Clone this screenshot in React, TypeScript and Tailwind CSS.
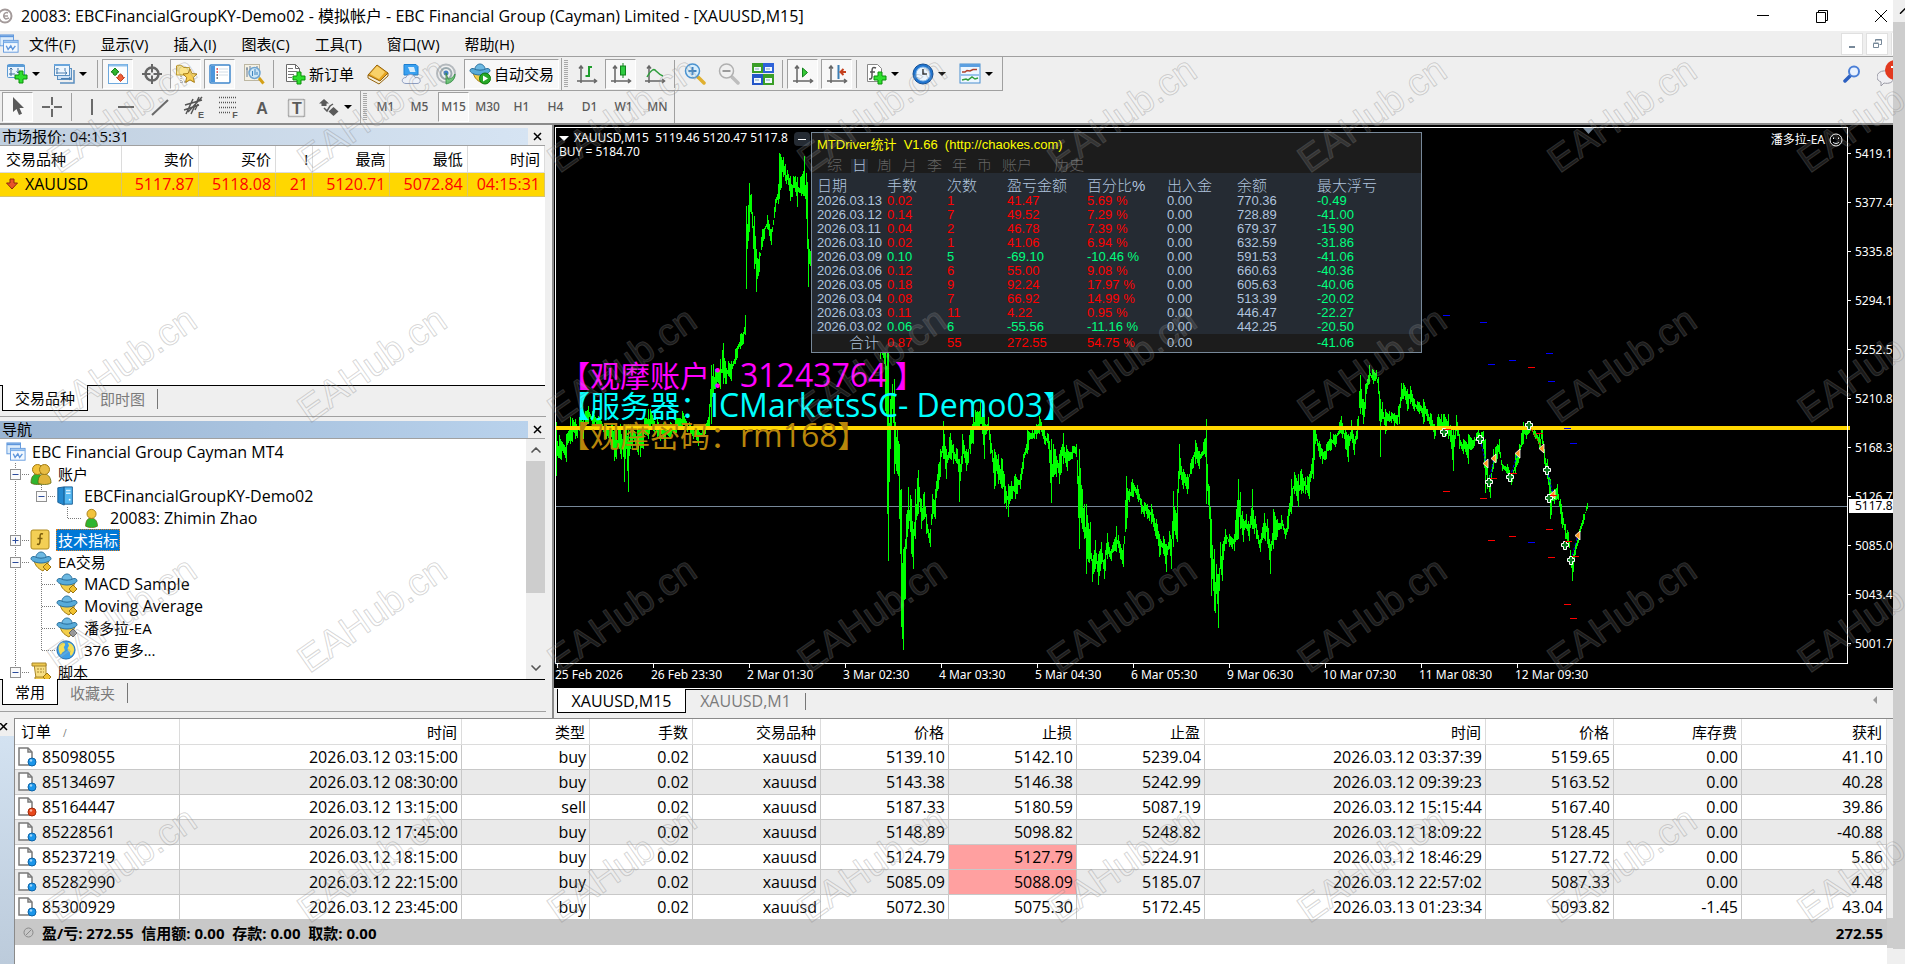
import type { ReactNode } from "react";
import { ChevronDown, ChevronUp } from "lucide-react";

/* ---------- data ---------- */

const menus = ["文件(F)", "显示(V)", "插入(I)", "图表(C)", "工具(T)", "窗口(W)", "帮助(H)"];
const periods = ["M1", "M5", "M15", "M30", "H1", "H4", "D1", "W1", "MN"];

const orders = [
  ["85098055", "2026.03.12 03:15:00", "buy", "0.02", "xauusd", "5139.10", "5142.10", "5239.04", "2026.03.12 03:37:39", "5159.65", "0.00", "41.10"],
  ["85134697", "2026.03.12 08:30:00", "buy", "0.02", "xauusd", "5143.38", "5146.38", "5242.99", "2026.03.12 09:39:23", "5163.52", "0.00", "40.28"],
  ["85164447", "2026.03.12 13:15:00", "sell", "0.02", "xauusd", "5187.33", "5180.59", "5087.19", "2026.03.12 15:15:44", "5167.40", "0.00", "39.86"],
  ["85228561", "2026.03.12 17:45:00", "buy", "0.02", "xauusd", "5148.89", "5098.82", "5248.82", "2026.03.12 18:09:22", "5128.45", "0.00", "-40.88"],
  ["85237219", "2026.03.12 18:15:00", "buy", "0.02", "xauusd", "5124.79", "5127.79", "5224.91", "2026.03.12 18:46:29", "5127.72", "0.00", "5.86"],
  ["85282990", "2026.03.12 22:15:00", "buy", "0.02", "xauusd", "5085.09", "5088.09", "5185.07", "2026.03.12 22:57:02", "5087.33", "0.00", "4.48"],
  ["85300929", "2026.03.12 23:45:00", "buy", "0.02", "xauusd", "5072.30", "5075.30", "5172.45", "2026.03.13 01:23:34", "5093.82", "-1.45", "43.04"],
];
const orderHeads = ["订单", "时间", "类型", "手数", "交易品种", "价格", "止损", "止盈", "时间", "价格", "库存费", "获利"];
const stopHit = ["85237219", "85282990"];

const statHeads = ["日期", "手数", "次数", "盈亏金额", "百分比%", "出入金", "余额", "最大浮亏"];
const stats = [
  ["2026.03.13", "0.02", "1", "41.47", "5.69 %", "0.00", "770.36", "-0.49"],
  ["2026.03.12", "0.14", "7", "49.52", "7.29 %", "0.00", "728.89", "-41.00"],
  ["2026.03.11", "0.04", "2", "46.78", "7.39 %", "0.00", "679.37", "-15.90"],
  ["2026.03.10", "0.02", "1", "41.06", "6.94 %", "0.00", "632.59", "-31.86"],
  ["2026.03.09", "0.10", "5", "-69.10", "-10.46 %", "0.00", "591.53", "-41.06"],
  ["2026.03.06", "0.12", "6", "55.00", "9.08 %", "0.00", "660.63", "-40.36"],
  ["2026.03.05", "0.18", "9", "92.24", "17.97 %", "0.00", "605.63", "-40.06"],
  ["2026.03.04", "0.08", "7", "66.92", "14.99 %", "0.00", "513.39", "-20.02"],
  ["2026.03.03", "0.11", "11", "4.22", "0.95 %", "0.00", "446.47", "-22.27"],
  ["2026.03.02", "0.06", "6", "-55.56", "-11.16 %", "0.00", "442.25", "-20.50"],
];

const dates = ["25 Feb 2026", "26 Feb 23:30", "2 Mar 01:30", "3 Mar 02:30", "4 Mar 03:30", "5 Mar 04:30", "6 Mar 05:30", "9 Mar 06:30", "10 Mar 07:30", "11 Mar 08:30", "12 Mar 09:30"];
const prices = ["5419.1", "5377.4", "5335.8", "5294.1", "5252.5", "5210.8", "5168.3", "5126.7", "5085.0", "5043.4", "5001.7"];

// x, high, low
type Bar = [number, number, number];
const runs: Bar[][] = [
  [
    [556, 423, 477], [560, 440, 460], [566, 435, 463], [570, 418, 445], [575, 420, 440], [583, 415, 440], [588, 407, 425], [592, 412, 426],
    [600, 418, 432], [606, 425, 440], [612, 425, 450], [614, 430, 462], [620, 425, 455], [624, 425, 483], [626, 430, 450], [628, 425, 493], [630, 425, 450],
    [640, 425, 458], [648, 410, 440], [650, 410, 430], [657, 420, 440], [665, 425, 445], [675, 420, 435], [682, 412, 430], [690, 425, 435],
    [698, 430, 447], [705, 425, 435], [709, 405, 427], [711, 366, 425], [713, 365, 395], [716, 372, 388], [720, 360, 390], [723, 344, 385],
    [725, 362, 385], [731, 362, 382], [735, 350, 365], [740, 335, 350], [743, 333, 345], [745, 316, 336],
  ],
  [
    [746, 207, 290], [747, 225, 250], [749, 184, 233], [751, 195, 215], [754, 217, 270], [756, 250, 293], [759, 253, 273], [762, 230, 248],
    [767, 216, 230], [771, 230, 246], [775, 200, 213], [778, 185, 205], [779, 154, 200], [783, 158, 178], [785, 165, 182], [790, 177, 202], [795, 177, 193],
    [797, 178, 208], [801, 177, 197], [804, 157, 197], [807, 183, 250], [808, 240, 288], [811, 238, 280],
  ],
  [
    [880, 340, 360], [884, 345, 365], [887, 353, 515], [888, 353, 562], [890, 400, 450], [892, 385, 410], [894, 380, 475], [897, 430, 475], [899, 445, 520], [901, 490, 628],
    [903, 550, 651], [905, 540, 600], [906, 515, 550], [908, 488, 530], [911, 500, 555], [913, 530, 570], [915, 490, 540], [918, 471, 515],
    [921, 500, 530], [924, 493, 520], [926, 515, 535], [930, 530, 548], [932, 495, 520], [935, 490, 520], [938, 465, 490], [940, 450, 478],
    [943, 422, 460], [946, 450, 480], [950, 434, 460], [953, 445, 465], [957, 450, 465], [959, 460, 503], [962, 435, 465], [966, 450, 472],
    [970, 430, 455], [973, 410, 445], [977, 412, 430], [980, 403, 425], [984, 415, 460], [988, 418, 430], [990, 435, 455], [994, 450, 490],
    [998, 455, 485], [1002, 460, 490], [1004, 475, 505], [1008, 485, 518], [1011, 482, 500], [1015, 475, 500], [1020, 475, 490], [1023, 455, 470],
    [1027, 430, 455], [1032, 430, 440], [1036, 425, 440], [1039, 417, 435], [1044, 430, 445], [1048, 435, 450], [1051, 440, 504], [1055, 450, 475],
    [1059, 455, 485], [1063, 434, 465], [1067, 450, 472], [1072, 447, 460], [1076, 445, 458], [1079, 450, 550], [1082, 490, 530], [1084, 505, 540],
    [1086, 505, 575], [1090, 523, 560], [1092, 560, 583], [1095, 541, 570], [1098, 555, 586], [1101, 543, 565], [1104, 560, 580], [1107, 534, 560],
    [1111, 550, 562], [1116, 527, 553], [1120, 545, 560], [1123, 545, 568], [1126, 477, 530], [1129, 490, 503], [1132, 480, 498], [1137, 486, 500],
    [1141, 500, 515], [1147, 505, 520], [1151, 505, 525], [1156, 520, 540], [1159, 535, 558], [1163, 537, 555], [1166, 545, 573], [1169, 532, 550],
    [1171, 540, 570], [1173, 492, 548], [1177, 490, 543], [1179, 445, 480], [1183, 470, 490], [1187, 475, 495], [1191, 460, 475], [1195, 441, 465],
    [1199, 452, 470], [1204, 440, 455], [1206, 420, 505], [1209, 487, 520], [1211, 520, 597], [1214, 550, 612], [1218, 575, 629], [1220, 543, 570],
    [1222, 545, 582], [1225, 530, 545], [1229, 535, 548], [1234, 535, 552], [1238, 480, 540], [1240, 493, 530], [1243, 520, 543], [1246, 515, 530],
    [1249, 525, 542], [1252, 490, 530], [1256, 525, 540], [1260, 540, 553], [1264, 514, 540], [1267, 520, 545], [1270, 545, 575], [1273, 510, 550],
    [1277, 520, 538], [1281, 516, 530], [1285, 530, 540], [1288, 510, 530], [1291, 480, 515], [1294, 473, 495], [1298, 475, 508], [1301, 470, 495],
    [1305, 478, 495], [1309, 475, 500], [1313, 430, 480], [1315, 427, 445], [1319, 442, 458], [1322, 450, 465], [1326, 445, 460], [1330, 433, 452],
    [1335, 435, 448], [1341, 417, 435], [1345, 430, 450], [1348, 435, 463], [1351, 421, 440], [1354, 440, 456], [1357, 420, 440], [1360, 376, 415],
    [1363, 400, 425], [1365, 385, 410], [1367, 380, 390], [1369, 366, 385], [1373, 371, 385], [1376, 371, 380], [1378, 378, 395], [1380, 400, 458],
    [1382, 403, 420], [1385, 410, 435], [1389, 412, 423], [1394, 414, 427], [1399, 405, 425], [1401, 384, 402], [1403, 384, 400], [1407, 390, 412],
    [1410, 387, 405], [1414, 400, 412], [1419, 403, 415], [1423, 400, 425], [1427, 410, 422], [1431, 415, 430], [1434, 425, 440], [1438, 415, 430],
    [1441, 415, 435], [1444, 415, 435], [1448, 415, 440], [1451, 430, 450], [1453, 430, 472], [1456, 416, 432], [1459, 435, 450], [1463, 440, 455],
    [1468, 435, 465], [1474, 438, 447], [1478, 430, 440], [1481, 433, 445], [1483, 432, 450], [1485, 440, 494], [1487, 465, 490], [1490, 480, 499],
    [1493, 450, 470], [1497, 445, 460], [1499, 440, 455], [1502, 465, 472], [1507, 465, 475], [1511, 475, 486], [1515, 455, 475], [1519, 445, 460],
    [1523, 423, 445], [1526, 425, 440], [1530, 422, 432], [1535, 432, 440], [1539, 435, 450], [1542, 428, 445], [1544, 450, 465], [1547, 460, 480],
    [1550, 480, 520], [1554, 490, 505], [1557, 485, 500], [1561, 505, 525], [1565, 525, 540], [1568, 533, 545], [1572, 560, 582], [1575, 545, 556],
    [1579, 530, 540], [1583, 515, 525], [1587, 504, 510],
  ],
];

function barPath(run: Bar[]) {
  let d = "";
  run.forEach(([x, hi, lo], i) => {
    d += `M${x}.5 ${hi}V${lo}`;
    const next = run[i + 1];
    if (!next) return;
    for (let px = x + 1; px < next[0]; px++) {
      const t = (px - x) / (next[0] - x);
      const h = hi + (next[1] - hi) * t;
      const l = lo + (next[2] - lo) * t;
      const shrink = (l - h) * 0.48;
      const a = ((px * 7919) % 13) / 13;
      const b = ((px * 104729) % 11) / 11;
      d += `M${px}.5 ${Math.round(h + shrink * a)}V${Math.round(l - shrink * b)}`;
    }
  });
  return d;
}

const blueTicks = [[1446, 316], [1483, 323], [1549, 354], [1491, 365], [1512, 361], [1551, 382], [1567, 429], [1573, 444], [1531, 543]];
const redTicks = [[1531, 368], [1447, 430], [1446, 492], [1483, 499], [1493, 479], [1513, 474], [1539, 434], [1549, 530], [1491, 541], [1512, 537], [1551, 558], [1553, 496], [1568, 542], [1575, 557], [1567, 605], [1573, 619]];
const entries = [[1444, 433], [1480, 440], [1489, 483], [1510, 478], [1529, 426], [1547, 471], [1549, 499], [1565, 546], [1571, 561]];
const exits = [[1486, 464], [1494, 459], [1518, 454], [1542, 449], [1553, 495], [1578, 536]];

/* ---------- icons ---------- */

const Svg = ({ children, size = 22 }: { children: ReactNode; size?: number }) => (
  <svg width={size} height={size} viewBox="0 0 22 22" fill="none" className="shrink-0">
    {children}
  </svg>
);

const Plus = ({ x = 9, y = 8 }: { x?: number; y?: number }) => (
  <path transform={`translate(${x} ${y})`} d="M4 0h4v4h4v4H8v4H4V8H0V4h4z" fill="#2ee02e" stroke="#0b8f0b" />
);

const NewChartIcon = () => (
  <Svg>
    <rect x="1.500" y="1.500" width="17" height="13" rx="1" fill="#eaf4fd" stroke="#5b9bd5" />
    <path d="M1 3h18" stroke="#5b9bd5" strokeWidth="2" />
    <path d="M5 5v8M3.500 6.500L5 5l1.500 1.500M3 11h6M12 5v5M10.500 8.500L12 10l1.500-1.500" stroke="#3d6c98" />
    <Plus x={9} y={8} />
  </Svg>
);
const ProfilesIcon = () => (
  <Svg>
    <path d="M7 20h14V7" stroke="#5b8fc0" strokeWidth="1.500" />
    <rect x="4.500" y="5.500" width="14" height="11" fill="#cfe3f6" stroke="#5b8fc0" />
    <rect x="1.500" y="1.500" width="15" height="11" fill="#eef6fd" stroke="#5b8fc0" />
    <path d="M1 2h16" stroke="#69a5dc" strokeWidth="2" />
    <path d="M4 5v6M3 6.500L4.500 5 6 6.500M3 10h11M12 8.500l2 1.500-2 1.500M12 5v3" stroke="#4a7fb0" />
    <path d="M8 15.500h9M16 14l2 1.500-2 1.500" stroke="#4a7fb0" />
  </Svg>
);
const MarketIcon = () => (
  <Svg>
    <rect x="1.500" y="1.500" width="19" height="19" fill="#fbfdff" stroke="#6da9de" />
    <path d="M2 2.500h18" stroke="#8fc0ec" strokeWidth="2" />
    <path d="M8 5l4 4-2 .5V11L8 12.500 6 11V9.500L4 9z" fill="#2fb52f" stroke="#14801a" />
    <path d="M13.500 18.500l4-4-2-.5v-1.500l-2-1.500-2 1.500V14l-2 .5z" fill="#f0603a" stroke="#c23d1c" />
  </Svg>
);
const TargetIcon = () => (
  <Svg>
    <circle cx="11" cy="11" r="6.500" stroke="#666" strokeWidth="2.500" />
    <path d="M11 1v8.500M11 12.500V21M1 11h8.500M12.500 11H21" stroke="#666" strokeWidth="2" />
  </Svg>
);
const FolderStarIcon = () => (
  <Svg>
    <path d="M1.500 3c0-1 5-1 6 0l1 1.500h6V12h-13z" fill="#fbe48a" stroke="#b8931f" />
    <path d="M6 13v7M7 19h5" stroke="#777" strokeDasharray="1 1" />
    <path d="M15 6l2 4.500 5 .5-3.600 3.400 1 5-4.400-2.500-4.400 2.500 1-5L8 11l5-.5z" fill="#f7cf52" stroke="#a67a12" />
  </Svg>
);
const NavIcon = () => (
  <Svg>
    <rect x="1" y="2" width="20" height="18" rx="1" fill="#fff" stroke="#3f87cc" strokeWidth="1.500" />
    <path d="M2 3h4v16H2z" fill="#4c96dc" />
    <path d="M7.500 6h1.500M7.500 9h1.500" stroke="#d33" strokeWidth="1.500" />
    <path d="M7.500 12h1.500M7.500 15h1.500" stroke="#555" strokeWidth="1.500" />
    <path d="M10 6h9M10 9h9M10 12h9" stroke="#d3dde6" />
  </Svg>
);
const TesterIcon = () => (
  <Svg>
    <rect x="1.500" y="1.500" width="15" height="16" fill="#f5f1e4" stroke="#bdb7a2" />
    <path d="M4 4v10M3 6h2M7 3v6M14 3v8" stroke="#6a7f95" />
    <circle cx="11.500" cy="10" r="5.500" fill="#cbe6f8" fillOpacity=".9" stroke="#6fa5d0" strokeWidth="1.500" />
    <path d="M9.500 13V8M12 12V6M14 12V9" stroke="#3f86c0" />
    <path d="M16 15l4.500 5.500" stroke="#d4a017" strokeWidth="3" />
  </Svg>
);
const OrderIcon = () => (
  <Svg>
    <path d="M2.500 1.500h9l4 4v13h-13z" fill="#fff" stroke="#6a6a6a" />
    <path d="M11.500 1.500v4h4" stroke="#6a6a6a" />
    <path d="M4 5.500h5M4 8.500h9M4 11.500h6M4 14.500h4" stroke="#777" />
    <Plus x={9} y={9} />
  </Svg>
);
const BookIcon = () => (
  <Svg>
    <path d="M1 12L10 2l11 8-8 9z" fill="#e6a421" stroke="#94620c" />
    <path d="M3 11l7-8 8 6-6 7z" fill="#f8d169" />
    <path d="M1 12v3l11 6 9-8v-3l-8 8z" fill="#f6efd9" stroke="#94620c" />
  </Svg>
);
const CloudIcon = () => (
  <Svg>
    <path d="M3 1.500h12l2 2V12H3z" fill="#39a0f0" stroke="#1d7fd0" />
    <path d="M7 4h6l1.500 5H9z" fill="#d4ecfd" />
    <path d="M5 20.500c-5 0-5-6 0-6 1-4 8-4 9 0 6-1 7 6 2 6z" fill="#eef1f8" stroke="#8c9cbf" />
  </Svg>
);
const SignalIcon = () => (
  <Svg>
    <circle cx="11" cy="10.500" r="9" stroke="#b4b9bd" strokeWidth="2" />
    <circle cx="11" cy="10.500" r="5.500" stroke="#9aa9ae" strokeWidth="2" />
    <circle cx="11" cy="10" r="2.500" fill="#3f7fc0" />
    <path d="M11 10v11c5-1 9-4 9-10-2 4-5 5-7 5z" fill="#5fbf6a" fillOpacity=".85" stroke="#2f8a40" strokeWidth=".8" />
  </Svg>
);
const HatIcon = ({ badge = "gold" }: { badge?: "gold" | "gray" | "play" }) => (
  <Svg>
    <path d="M4 9c1 5 3 8 9 11l4-5 2-6z" fill="#f3ce4a" stroke="#a37b12" />
    <path d="M5.500 7.500C6 2.500 9 1 11 1s5 1.500 5.500 6.500z" fill="#6db9e2" stroke="#2a6f9c" />
    <path d="M1 7.500c0-2 3-2.500 4.500-1.500 2 1.500 9 1.500 11 0C18 5 21 5.500 21 7.500S17 12 11 12 1 9.500 1 7.500z" fill="#58abd9" stroke="#2a6f9c" />
    {badge === "play" ? (
      <>
        <circle cx="16" cy="15.500" r="5.500" fill="#27a827" stroke="#0f7a0f" />
        <path d="M14 12.500v6l5-3z" fill="#fff" />
      </>
    ) : (
      <path d="M17 12l4 4-4 4-4-4z" fill={badge === "gold" ? "#f2c230" : "#999"} stroke={badge === "gold" ? "#9a7410" : "#666"} />
    )}
  </Svg>
);
const Axes = () => <path d="M5 3v17M1 18h19M3 5.500L5 3l2 2.500M18 16l2.500 2-2.500 2" stroke="#666" strokeWidth="1.500" />;
const BarsIcon = () => (
  <Svg><Axes /><path d="M13 3v11M13 4h3M9.500 13h3.500" stroke="#1f9e2d" strokeWidth="2" /></Svg>
);
const CandleIcon = () => (
  <Svg><Axes /><path d="M13 0v15" stroke="#13801d" /><rect x="10.500" y="3" width="5" height="9" fill="#2ecc40" stroke="#13801d" /></Svg>
);
const LineIcon = () => (
  <Svg><Axes /><path d="M3 14c4-7 7-9 9-6 2 2 4 4 7 5" stroke="#2f9e3d" strokeWidth="1.500" /></Svg>
);
const ZoomIcon = ({ out = false }: { out?: boolean }) => (
  <Svg>
    <path d="M14 14l6 6" stroke={out ? "#bdbdbd" : "#e0b030"} strokeWidth="3.500" strokeLinecap="round" />
    <circle cx="8.500" cy="8" r="7" fill={out ? "#f0f0f0" : "#d8eefc"} stroke={out ? "#b0b0b0" : "#4b93d0"} strokeWidth="1.500" />
    <path d={out ? "M4.500 8h8" : "M4.500 8h8M8.500 4v8"} stroke={out ? "#9a9a9a" : "#3f83c0"} strokeWidth="2" />
  </Svg>
);
const TileIcon = () => (
  <Svg>
    <path d="M0 0h11v10H0z" fill="#3a9e28" /><path d="M11 0h11v10H11z" fill="#2e62d8" />
    <path d="M0 11h11v11H0z" fill="#2456c8" /><path d="M11 11h11v11H11z" fill="#3a9e28" />
    <path d="M2 4h7v4H2zM13 4h7v4h-7zM2 15h7v5H2zM13 15h7v5h-7z" fill="#f2f8ff" />
    <path d="M3 6h4M14 6h4M3 17h4M14 17h4" stroke="#8ab" />
  </Svg>
);
const ScrollIcon = () => (
  <Svg><Axes /><path d="M10.500 5v9l5-4.500z" fill="#36c936" stroke="#13801d" /></Svg>
);
const ShiftIcon = () => (
  <Svg><Axes /><path d="M12.500 2v14" stroke="#3c7fb5" strokeWidth="2" /><path d="M20 9h-5M17.500 6l-3 3 3 3" stroke="#c5401d" strokeWidth="2" /></Svg>
);
const IndicatorIcon = () => (
  <Svg>
    <path d="M2.500 1.500h10l4 4v13h-14z" fill="#fff" stroke="#888" />
    <path d="M11 5c-3-1.500-4 0-4 3v5c0 3-1 3-3 3M5 9h5" stroke="#555" strokeWidth="1.500" />
    <Plus x={9} y={9} />
  </Svg>
);
const ClockIcon = () => (
  <Svg>
    <circle cx="11" cy="11" r="10" fill="#1f74cf" stroke="#134f94" />
    <circle cx="11" cy="11" r="7" fill="#eaf5ff" stroke="#85b8e8" />
    <path d="M11 6v5h4" stroke="#333" strokeWidth="1.500" />
  </Svg>
);
const TemplateIcon = () => (
  <Svg>
    <rect x="1" y="1" width="20" height="19" fill="#eef7ff" stroke="#4a8fd0" />
    <path d="M1 2.500h20" stroke="#5b9fe0" strokeWidth="3" />
    <path d="M3 9h3l2-1.500 3 .5 3-1.500h4" stroke="#b0402a" strokeWidth="1.500" />
    <path d="M2 12h18" stroke="#7fb2e6" strokeWidth="1.500" />
    <path d="M3 17l4-1 2 1 4-3 3 2 3-1" stroke="#2f9e3a" strokeWidth="1.500" />
  </Svg>
);

const DrawIcon = ({ d }: { d: string }) => (
  <Svg><path d={d} stroke="#6a6a6a" strokeWidth="2" /></Svg>
);
const CursorIcon = () => (
  <Svg><path d="M6 1v15l3.500-3 2.500 6 3-1.200-2.500-5.800H17z" fill="#5a5a5a" /></Svg>
);
const LetterIcon = ({ kind }: { kind: "E" | "F" | "A" | "T" }) => (
  <Svg>
    {kind === "E" && <path d="M3 18L10 3M8 18L16 1M2 9l17-5M1 14l15-5M5 16L19 1M12 14l3-6" stroke="#555" strokeWidth="1.500" />}
    {kind === "F" && <path d="M2 1.500h18M2 6.500h18M2 11.500h18M2 16.500h11" stroke="#555" strokeDasharray="1 1" strokeWidth="1.500" />}
    {kind === "T" && <rect x="3.500" y="3.500" width="16" height="17" stroke="#777" strokeDasharray="1 1" strokeWidth="1.500" />}
    <text
      x={kind === "A" ? 11 : kind === "T" ? 12 : 18}
      y={kind === "A" || kind === "T" ? 18 : 22}
      textAnchor="middle"
      fontFamily="Liberation Sans"
      fontWeight="bold"
      fontSize={kind === "A" || kind === "T" ? 16 : 9}
      fill="#5a5a5a"
    >
      {kind}
    </text>
  </Svg>
);
const ShapesIcon = () => (
  <Svg>
    <path d="M6 3l5 4.500H8.500V10h-5V7.500H1z" fill="#5a5a5a" />
    <path d="M15.500 20l5-4.500-5-4.500-5 4.500z" fill="#5a5a5a" />
    <path d="M6 12l3 3 3-5 3-2" stroke="#5a5a5a" strokeWidth="1.500" />
  </Svg>
);

const TerminalIcon = () => (
  <Svg size={20}>
    <rect x="1" y="1" width="15" height="12" fill="#dcecfb" stroke="#5e96dc" />
    <path d="M1 2.500h15" stroke="#5e96dc" strokeWidth="2" />
    <rect x="5" y="7" width="16" height="13" fill="#f3f9ff" stroke="#5e96dc" />
    <path d="M5 9h16" stroke="#7fb2ea" strokeWidth="2" />
    <path d="M8 13l2 4 3-4 2 4 3-4" stroke="#5e96dc" strokeWidth="1.500" />
  </Svg>
);
const Person = ({ x = 0, head = "#f2c33c", body = "#2fb52f" }: { x?: number; head?: string; body?: string }) => (
  <g transform={`translate(${x} 0)`}>
    <path d="M1 20c0-7 3-9 6-9s7 2 7 9c-3 2-10 2-13 0z" fill={body} stroke="#5f6a12" strokeWidth=".8" />
    <circle cx="7.500" cy="6.500" r="5" fill={head} stroke="#a37b12" />
  </g>
);
const UsersIcon = () => (
  <Svg><Person /><Person x={7} body="#e0b43a" head="#e8bd45" /></Svg>
);
const UserIcon = () => (
  <Svg size={20}><Person x={3} /></Svg>
);
const ServerIcon = () => (
  <Svg size={20}>
    <path d="M2 2l7-1v20l-7-3z" fill="#2388cf" stroke="#145b92" />
    <path d="M9 1h9v19H9z" fill="#53b7f2" stroke="#145b92" />
    <path d="M11 5h5M11 8h5" stroke="#d7f0ff" strokeWidth="1.500" /><circle cx="15" cy="15" r="1" fill="#fff" />
  </Svg>
);
const FuncIcon = () => (
  <Svg>
    <rect x="1" y="1" width="18" height="19" rx="2" fill="#f3cf55" stroke="#b08b1e" />
    <path d="M13 5c-3-1-3 1-3 4v3c0 3-1 4-3 3M7.500 9.500h5" stroke="#7a5c0c" strokeWidth="1.500" />
  </Svg>
);
const GlobeIcon = () => (
  <Svg size={20}>
    <circle cx="11" cy="11" r="10" fill="#3ba0ea" stroke="#1a64a8" />
    <path d="M4 5c3-3 6-2 6 0s-2 2-1 4 1 3-1 4-2 4-3 3c-2-3-3-8-1-11zM13 3c4 0 7 4 7 8-1 4-3 7-4 6s0-4-2-5-1-4 0-5-1-3-1-4z" fill="#f5de56" />
  </Svg>
);
const ScriptIcon = () => (
  <Svg>
    <path d="M4 3h12v14H6z" fill="#f7df84" stroke="#a8862a" />
    <path d="M2 2h14v3H2zM5 16h12v3H5z" fill="#edc84e" stroke="#a8862a" />
    <path d="M7 8h7M7 11h7" stroke="#a8862a" strokeDasharray="2 1" />
    <path d="M17 12l4 4-4 4-4-4z" fill="#f2c230" stroke="#9a7410" />
  </Svg>
);
const OrderDoc = ({ sell = false }: { sell?: boolean }) => (
  <svg width="20" height="20" viewBox="0 0 20 20" fill="none" className="shrink-0">
    <path d="M1 1h9l4 4v13H1z" fill="#fff" stroke="#7a7a7a" strokeWidth="1.500" />
    <path d="M10 1v4h4" stroke="#7a7a7a" strokeWidth="1.500" />
    <circle cx="14" cy="15" r="4" fill={sell ? "#e8481c" : "#1b96ea"} stroke={sell ? "#a42c0a" : "#0d64a8"} />
    <circle cx="13" cy="13.500" r="1.200" fill="#fff" fillOpacity=".6" />
  </svg>
);

/* ---------- toolbar parts ---------- */

const Caret = () => <span className="size-0 border-x-4 border-t-4 border-x-transparent border-t-black" />;

const Tool = ({ label, pressed = false, children }: { label: string; pressed?: boolean; children: ReactNode }) => (
  <button
    aria-label={label}
    className={`flex h-[30px] w-[31px] items-center justify-center ${pressed ? "border border-[#a0a0a0] border-r-white border-b-white bg-[#f8f8f8]" : ""}`}
  >
    {children}
  </button>
);
const DropTool = ({ label, children }: { label: string; children: ReactNode }) => (
  <button aria-label={label} className="flex h-[30px] w-11 items-center gap-1 pl-1">
    {children}
    <Caret />
  </button>
);
const Sep = () => <span className="mx-px h-7 w-px bg-[#a0a0a0]" />;
const Grip = () => (
  <>
    <span className="-mx-px h-8 w-px bg-[#a0a0a0]" />
    <span className="h-7 w-1 bg-[repeating-linear-gradient(#a8a8a8_0_1px,#efefef_1px_2px)]" />
  </>
);

const Toolbars = () => (
  <div className="bg-[#efefef] text-[15px]">
    <div className="flex h-[34px] border-t border-[#a0a0a0]">
      <div className="flex h-[34px] items-center gap-[3px] border-r border-b border-[#a0a0a0] pr-[3px] pl-0.5">
        <DropTool label="新图表"><NewChartIcon /></DropTool>
        <DropTool label="配置文件"><ProfilesIcon /></DropTool>
        <Sep />
        <Tool label="市场报价" pressed><MarketIcon /></Tool>
        <Tool label="数据窗口"><TargetIcon /></Tool>
        <Tool label="导航" pressed><FolderStarIcon /></Tool>
        <Tool label="终端" pressed><NavIcon /></Tool>
        <Tool label="策略测试"><TesterIcon /></Tool>
        <Sep />
        <button className="flex h-[30px] w-[81px] items-center gap-[3px] pl-1.5"><OrderIcon />新订单</button>
        <Tool label="MetaEditor"><BookIcon /></Tool>
        <Tool label="VPS"><CloudIcon /></Tool>
        <Tool label="信号"><SignalIcon /></Tool>
        <button className="flex h-[30px] w-[95px] items-center gap-[3px] border border-[#a0a0a0] border-r-white border-b-white bg-[#f8f8f8] pl-1">
          <HatIcon badge="play" />自动交易
        </button>
        <Grip />
        <Tool label="柱状图"><BarsIcon /></Tool>
        <Tool label="K线图" pressed><CandleIcon /></Tool>
        <Tool label="折线图"><LineIcon /></Tool>
        <Sep />
        <Tool label="放大"><ZoomIcon /></Tool>
        <Tool label="缩小"><ZoomIcon out /></Tool>
        <Tool label="平铺"><TileIcon /></Tool>
        <Sep />
        <Tool label="自动滚动" pressed><ScrollIcon /></Tool>
        <Tool label="图表平移" pressed><ShiftIcon /></Tool>
        <Sep />
        <DropTool label="指标"><IndicatorIcon /></DropTool>
        <DropTool label="周期"><ClockIcon /></DropTool>
        <DropTool label="模板"><TemplateIcon /></DropTool>
      </div>
      <div className="ml-auto flex items-center gap-4 overflow-hidden">
        <button aria-label="搜索">
          <svg width="18" height="18" viewBox="0 0 18 18" fill="none">
            <path d="M7 11l-5 5" stroke="#2b5fc0" strokeWidth="3.500" strokeLinecap="round" />
            <circle cx="11" cy="6.500" r="5" fill="#e9f2ff" stroke="#4b7fd6" strokeWidth="2" />
          </svg>
        </button>
        <button aria-label="消息" className="w-4 overflow-hidden">
          <svg width="28" height="28" viewBox="0 0 28 28" fill="none">
            <path d="M0 17c0-8 14-8 16-1s-5 8-9 7l-3 3v-4c-2-1-4-2-4-5z" fill="#efeff3" stroke="#9a9aa5" />
            <circle cx="18" cy="10" r="10" fill="#e2391f" />
            <path d="M14 7h3v8" stroke="#fff" strokeWidth="2" />
          </svg>
        </button>
      </div>
    </div>
    <div className="flex h-[35px] border-b-2 border-[#8a8a8a] pt-px">
      <div className="flex items-center gap-[3px] border-r border-[#a0a0a0] pr-px pl-0.5">
        <Tool label="光标" pressed><CursorIcon /></Tool>
        <Tool label="十字线"><DrawIcon d="M11 1v8M11 13v8M1 11h8M13 11h8" /></Tool>
        <Sep />
        <Tool label="垂直线"><DrawIcon d="M11 3v16" /></Tool>
        <Tool label="水平线"><DrawIcon d="M3 11h16" /></Tool>
        <Tool label="趋势线"><DrawIcon d="M3 19L19 4" /></Tool>
        <Tool label="通道"><LetterIcon kind="E" /></Tool>
        <Tool label="斐波那契"><LetterIcon kind="F" /></Tool>
        <Tool label="文字"><LetterIcon kind="A" /></Tool>
        <Tool label="标签"><LetterIcon kind="T" /></Tool>
        <DropTool label="箭头"><ShapesIcon /></DropTool>
        <Grip />
        {periods.map((p) => (
          <button
            key={p}
            className={`h-[30px] w-[31px] text-center font-['Noto_Sans'] text-xs font-medium text-[#5a5a5a] ${p === "M15" ? "border border-[#a0a0a0] border-r-white border-b-white bg-[#f8f8f8]" : ""}`}
          >
            {p}
          </button>
        ))}
      </div>
    </div>
  </div>
);

/* ---------- side panels ---------- */

const PanelTitle = ({ text, tone }: { text: string; tone: string }) => (
  <div className="mt-[2px] flex h-[18px] shrink-0 items-center">
    <h2 className={`h-[17px] flex-1 bg-gradient-to-r pl-0.5 text-[15px] leading-[17px] ${tone}`}>{text}</h2>
    <button aria-label="关闭" className="flex w-[18px] justify-center">
      <svg width="9" height="9" viewBox="0 0 9 9"><path d="M1 1l7 7M8 1L1 8" stroke="#000" strokeWidth="1.500" /></svg>
    </button>
  </div>
);

const PanelTabs = ({ items }: { items: string[] }) => (
  <div className="mr-px flex h-[27px] shrink-0 border-t border-black pl-0.5 text-[15px]">
    {items.map((t, i) => (
      <button
        key={t}
        className={i === 0 ? "-mt-px h-[26px] border border-t-0 border-black bg-white px-3" : "my-[3px] border-r border-[#777] px-3 leading-5 text-[#7b7b7b]"}
      >
        {t}
      </button>
    ))}
  </div>
);

const MarketWatch = () => (
  <section className="flex h-[292px] shrink-0 flex-col border-b border-[#a0a0a0]">
    <PanelTitle text="市场报价: 04:15:31" tone="from-[#c0cfdf] to-[#d6e4f3]" />
    <div className="mr-px flex-1 border-t border-[#a0a0a0] bg-white">
      <table className="w-full table-fixed border-collapse">
        <colgroup>
          <col className="w-[121px]" />
          <col />
          <col />
          <col className="w-[37px]" />
          <col />
          <col />
          <col />
        </colgroup>
        <thead>
          <tr className="h-[26px] text-[15px]">
            {["交易品种", "卖价", "买价", "!", "最高", "最低", "时间"].map((h, i) => (
              <th key={h} className={`border-r border-b border-[#dcdcdc] font-normal ${i ? "pr-1 text-right" : "pl-1.5 text-left"}`}>{h}</th>
            ))}
          </tr>
        </thead>
        <tbody>
          <tr className="h-6 bg-[#ffd700] text-[#f00]">
            <td className="border-r border-b border-[#d8c46a] text-black">
              <span className="flex items-center gap-[7px] pl-1.5">
                <svg width="12" height="12" viewBox="0 0 12 12"><path d="M4 1h4v4h3.500L6 11 .5 5H4z" fill="#e8552a" stroke="#8f2a0c" /></svg>
                XAUUSD
              </span>
            </td>
            {["5117.87", "5118.08", "21", "5120.71", "5072.84", "04:15:31"].map((v) => (
              <td key={v} className="border-r border-b border-[#d8c46a] pr-1 text-right">{v}</td>
            ))}
          </tr>
        </tbody>
      </table>
    </div>
    <PanelTabs items={["交易品种", "即时图"]} />
    <div className="h-1 shrink-0" />
  </section>
);

// tree guides: "v" runs through, "b" branches, "e" ends, "+", "-" and "_" are boxes
const Guide = ({ kind }: { kind: string }) => (
  <svg width="26" height="22" viewBox="0 0 26 22" fill="none" className="shrink-0">
    {kind !== " " && <path d={kind === "e" || kind === "_" ? "M11.500 0v11" : "M11.500 0v22"} stroke="#7a7a7a" strokeDasharray="1 1" />}
    {kind !== "v" && kind !== " " && <path d="M12 11.500h14" stroke="#7a7a7a" strokeDasharray="1 1" />}
    {"+-_".includes(kind) && (
      <>
        <rect x="6.500" y="6.500" width="10" height="10" fill="#fafafa" stroke="#919191" />
        <path d={kind === "+" ? "M8.500 11.500h6M11.500 8.500v6" : "M8.500 11.500h6"} stroke="#2b4b9b" />
      </>
    )}
  </svg>
);

const tree: { guides: string; icon: ReactNode; text: string; selected?: boolean }[] = [
  { guides: "-", icon: <UsersIcon />, text: "账户" },
  { guides: "v_", icon: <ServerIcon />, text: "EBCFinancialGroupKY-Demo02" },
  { guides: "v e", icon: <UserIcon />, text: "20083: Zhimin Zhao" },
  { guides: "+", icon: <FuncIcon />, text: "技术指标", selected: true },
  { guides: "-", icon: <HatIcon />, text: "EA交易" },
  { guides: "vb", icon: <HatIcon />, text: "MACD Sample" },
  { guides: "vb", icon: <HatIcon />, text: "Moving Average" },
  { guides: "vb", icon: <HatIcon badge="gray" />, text: "潘多拉-EA" },
  { guides: "ve", icon: <GlobeIcon />, text: "376 更多..." },
  { guides: "-", icon: <ScriptIcon />, text: "脚本" },
];

const isLatin = (text: string) => /^[ -~]+$/.test(text);

const Navigator = () => (
  <section className="flex min-h-0 flex-1 flex-col border-b border-[#a0a0a0]">
    <PanelTitle text="导航" tone="from-[#9ab5d3] to-[#b9d2ec]" />
    <div className="mr-px flex min-h-0 flex-1 border-t border-[#a0a0a0] bg-white">
      <ul className="flex-1 overflow-hidden pt-0.5">
        <li className="flex h-[22px] items-center gap-1.5 pl-1.5"><TerminalIcon />EBC Financial Group Cayman MT4</li>
        {tree.map((n) => (
          <li key={n.text} className={`flex h-[22px] items-center pl-1 ${isLatin(n.text) ? "" : "text-[15px]"}`}>
            {n.guides.split("").map((g, i) => <Guide key={i} kind={g} />)}
            <span className="flex w-[26px] shrink-0">{n.icon}</span>
            <span className={n.selected ? "border border-dotted border-[#e08020] bg-[#0078d7] px-px leading-5 text-white" : "px-0.5"}>{n.text}</span>
          </li>
        ))}
      </ul>
      <div className="flex w-[19px] flex-col items-center bg-[#efefef] text-[#555]">
        <ChevronUp size={16} strokeWidth={2.5} className="my-[3px] shrink-0" />
        <div className="h-[132px] w-full bg-[#cdcdcd]" />
        <ChevronDown size={16} strokeWidth={2.5} className="mt-auto mb-[3px] shrink-0" />
      </div>
    </div>
    <PanelTabs items={["常用", "收藏夹"]} />
    <div className="h-[5px] shrink-0" />
  </section>
);

/* ---------- chart ---------- */

const Plot = () => (
  <svg className="absolute inset-0 size-full">
    <g transform="translate(-556 -129)">
      <path d="M556 507.500H2400" stroke="#778899" />
      {runs.map((r, i) => <path key={i} d={barPath(r)} stroke="#0f0" shapeRendering="crispEdges" />)}
      <path d="M556 429H2400" stroke="#ffd700" strokeWidth="4" />
      <g stroke="#00f" strokeDasharray="3 2">
        <path d="M1480 440L1486 464M1489 483L1494 459M1510 478L1518 454M1547 471L1553 495M1571 561L1578 536" />
        <path d="M1529 426L1542 449" stroke="#f00" />
      </g>
      {entries.map(([x, y]) => (
        <path key={`${x}-${y}`} transform={`translate(${x - 4} ${y - 4})`} d="M2.500.5h3v2h2v3h-2v3h-3v-3h-2v-3h2z" fill="#0a7a1e" stroke="#fff" />
      ))}
      {exits.map(([x, y]) => (
        <path key={`${x}-${y}`} transform={`translate(${x - 3} ${y - 4})`} d="M5 0v9L0 4.500z" fill="#ff9a1f" stroke="#fff" strokeWidth=".8" />
      ))}
      <path d={blueTicks.map(([x, y]) => `M${x - 3} ${y}.5h7`).join("")} stroke="#00f" shapeRendering="crispEdges" />
      <path d={redTicks.map(([x, y]) => `M${x - 3} ${y}.5h7`).join("")} stroke="#f00" shapeRendering="crispEdges" />
      <path d="M1583 129h11l-5.500 6z" fill="#778899" />
    </g>
  </svg>
);

const statTone = (row: string[], col: number) => {
  if (col === 7) return "text-[#00ff7f]";
  if (col === 0 || col > 4) return "text-[#b0c4de]";
  return row[3].startsWith("-") ? "text-[#00ff7f]" : "text-[#f00]";
};

const StatsPanel = () => (
  <div className="absolute top-1 left-[255px] w-[611px] border border-[#778899] bg-[#252b33] font-['Liberation_Sans','Noto_Sans_CJK_SC',sans-serif] text-[13px] text-[#b0c4de]">
    <div className="h-10 bg-[#1c1c1c]">
      <h3 className="h-6 pl-[5px] leading-6 whitespace-pre text-[#ff0]">MTDriver统计  V1.66  (http://chaokes.com)</h3>
      <div className="flex h-4 items-end gap-2 pl-3.5 leading-[14px] text-[#646464]">
        {["综", "日", "周", "月", "季", "年", "币", "账户", "历史"].map((t) => (
          <button
            key={t}
            className={`flex h-[14px] items-end overflow-hidden px-px text-[15px] leading-[16px] font-light ${t === "日" ? "bg-[#252b33] text-[#b0c4de]" : ""} ${t === "历史" ? "ml-3" : ""}`}
          >
            {t}
          </button>
        ))}
      </div>
    </div>
    <table className="w-full table-fixed border-collapse leading-[14px]">
      <colgroup>
        <col className="w-[75px]" />
        <col className="w-[60px]" />
        <col className="w-[60px]" />
        <col className="w-20" />
        <col className="w-20" />
        <col className="w-[70px]" />
        <col className="w-20" />
        <col />
      </colgroup>
      <thead>
        <tr className="h-[21px]">
          {statHeads.map((h, i) => (
            <th key={h} className={`p-0 pt-1 text-left text-[15px] font-light ${i === 0 ? "pl-[5px]" : ""}`}>{h}</th>
          ))}
        </tr>
      </thead>
      <tbody>
        {stats.map((row) => (
          <tr key={row[0]} className="h-[14px]">
            {row.map((v, i) => (
              <td key={i} className={`p-0 ${i === 0 ? "pl-[5px]" : ""} ${statTone(row, i)}`}>{v}</td>
            ))}
          </tr>
        ))}
      </tbody>
      <tfoot>
        <tr className="h-[18px] bg-[#1c1c1c]">
          {["合计", "0.87", "55", "272.55", "54.75 %", "0.00", "", "-41.06"].map((v, i) => (
            <td
              key={i}
              className={`p-0 ${i === 0 ? "pr-2 text-right text-[15px] font-light" : i === 7 ? "text-[#00ff7f]" : i < 5 ? "text-[#f00]" : ""}`}
            >
              {v}
            </td>
          ))}
        </tr>
      </tfoot>
    </table>
  </div>
);

const ChartWindow = () => (
  <section className="flex min-w-0 flex-1 flex-col border-l-2 border-[#8a8a8a]">
    <div className="flex min-h-0 flex-1 overflow-hidden bg-black pt-[2px] pl-px font-['Noto_Sans','Noto_Sans_CJK_SC',sans-serif] text-xs text-white">
      <div className="flex min-w-0 flex-1 flex-col">
        <div className="relative flex-1 overflow-hidden border border-white">
          <Plot />
          <div className="absolute top-[3px] left-[3px] leading-[14px]">
            <p className="flex items-center gap-[5px] whitespace-pre">
              <span className="border-x-[5px] border-t-[5px] border-x-transparent border-t-white" />
              XAUUSD,M15  5119.46 5120.47 5117.8
            </p>
            <p>BUY = 5184.70</p>
          </div>
          <p className="absolute top-[3px] right-1 flex items-center gap-1 leading-[18px]">
            潘多拉-EA
            <svg width="14" height="14" viewBox="0 0 14 14" fill="none" stroke="#fff">
              <circle cx="7" cy="7" r="6" />
              <path d="M4.500 4.500v1.500M9.500 4.500v1.500M4 9c1.500 2 4.500 2 6 0" />
            </svg>
          </p>
          <div className="absolute top-[232px] left-1 font-['Open_Sans','Noto_Sans_CJK_SC',sans-serif] text-3xl leading-[30px] whitespace-pre">
            <p className="h-[30px] text-[#f0f]">【观摩账户：<span className="text-[32px]">31243764 </span>】</p>
            <p className="h-[30px] text-[#0ff]">【服务器：<span className="text-[32px]">ICMarketsSC- Demo03</span>】</p>
            <p className="h-[30px] text-[#b8860b]">【观摩密码：<span className="text-[32px]">rm168</span>】</p>
          </div>
          <button aria-label="收起" className="absolute top-1 left-[238px] flex h-3.5 w-4 items-center justify-center rounded-sm bg-[#252b33]">
            <span className="h-px w-2 bg-white" />
          </button>
          <StatsPanel />
        </div>
        <div className="flex h-6 shrink-0">
          {dates.map((d) => (
            <span key={d} className="relative w-24 shrink-0 pt-0.5 leading-[18px] whitespace-nowrap before:absolute before:top-0 before:left-0.5 before:h-1 before:w-px before:bg-white">
              {d}
            </span>
          ))}
        </div>
      </div>
      <div className="relative flex w-[45px] shrink-0 flex-col pt-[2px]">
        {prices.map((p) => (
          <span key={p} className="flex h-[49px] shrink-0 items-center gap-1 before:h-px before:w-[3px] before:bg-white">
            {p}
          </span>
        ))}
        <span className="absolute top-[372px] left-px w-full bg-white pl-1.5 leading-[14px] text-black">5117.8</span>
        <span className="absolute top-[299px] left-0 h-1 w-0.5 bg-[#ffd700]" />
      </div>
    </div>
    <div className="flex h-[30px] shrink-0 items-start border-t border-white bg-[#efefef] pl-[3px]">
      <div className="flex h-6 flex-1 border-t border-black">
        <button className="-mt-px h-6 w-[129px] border border-t-0 border-black bg-white leading-5">XAUUSD,M15</button>
        <button className="my-[3px] w-[120px] border-r border-[#777] leading-[17px] text-[#7b7b7b]">XAUUSD,M1</button>
        <span className="mt-1.5 mr-4 ml-auto size-0 border-y-4 border-r-4 border-y-transparent border-r-[#999]" />
      </div>
    </div>
  </section>
);

/* ---------- terminal ---------- */

const Terminal = () => (
  <section className="flex h-[246px] shrink-0">
    <div className="flex w-[15px] flex-col border-r border-[#8a8a8a] bg-[#efefef]">
      <button aria-label="关闭终端" className="flex h-[18px] items-center">
        <svg width="8" height="8" viewBox="0 0 8 8"><path d="M0 0l7 7M7 0L0 7" stroke="#000" strokeWidth="1.500" /></svg>
      </button>
      <div className="flex-1 bg-gradient-to-b from-[#d3e2f1] to-[#bccbdb]" />
    </div>
    <div className="min-w-0 flex-1 border-t border-[#8a8a8a] bg-white">
      <table className="w-full table-fixed border-separate border-spacing-0">
        <colgroup>
          <col className="w-[165px]" />
          <col className="w-[282px]" />
          <col className="w-32" />
          <col className="w-[103px]" />
          <col className="w-32" />
          <col className="w-32" />
          <col className="w-32" />
          <col className="w-32" />
          <col className="w-[281px]" />
          <col className="w-32" />
          <col className="w-32" />
          <col />
        </colgroup>
        <thead>
          <tr className="h-[26px] text-[15px]">
            {orderHeads.map((h, i) => (
              <th key={i} className={`border-r border-b border-[#dcdcdc] p-0 font-normal ${i ? "pr-1 text-right" : "pl-1.5 text-left"}`}>
                {h}
                {i === 0 && <span className="ml-3 text-[10px] text-[#777]">/</span>}
              </th>
            ))}
          </tr>
        </thead>
        <tbody>
          {orders.map((row) => (
            <tr key={row[0]} className="h-[25px] even:bg-[#eaeaea]">
              {row.map((v, i) => (
                <td key={i} className={`border-r border-b border-[#c8c8c8] p-0 ${i ? "pr-[3px] text-right" : ""} ${i === 6 && stopHit.includes(row[0]) ? "bg-[#ffa0a0]" : ""}`}>
                  {i === 0 ? <span className="flex items-center gap-1 pl-[3px]"><OrderDoc sell={row[2] === "sell"} />{v}</span> : v}
                </td>
              ))}
            </tr>
          ))}
        </tbody>
        <tfoot>
          <tr className="h-[25px] bg-[#c8c8c8] text-[15px] font-bold">
            <td colSpan={11} className="p-0">
              <span className="flex items-center gap-2 pl-2 whitespace-pre">
                <svg width="11" height="11" viewBox="0 0 11 11" fill="none" stroke="#8a8a8a"><circle cx="5.500" cy="5.500" r="4.500" /><path d="M3 8l5-5" /></svg>
                盈/亏: 272.55  信用额: 0.00  存款: 0.00  取款: 0.00
              </span>
            </td>
            <td className="p-0 pr-1 text-right">272.55</td>
          </tr>
        </tfoot>
      </table>
    </div>
    <div className="flex w-1.5 flex-col border-t border-[#8a8a8a] bg-[#efefef]">
      <div className="mt-[199px] h-[30px] bg-[#cdcdcd]" />
    </div>
  </section>
);

const Watermark = () => (
  <div aria-hidden className="pointer-events-none absolute inset-0 grid auto-rows-[250px] grid-cols-[repeat(8,250px)] overflow-hidden font-['Liberation_Sans']">
    {Array.from({ length: 32 }, (_, i) => (
      <span key={i} className="flex items-start pt-[142px] pl-[62px]">
        <span className="origin-bottom-left -rotate-[35deg] text-[38px] leading-9 text-white/10 [-webkit-text-stroke:1px_rgba(120,120,120,0.3)]">
          EAHub.cn
        </span>
      </span>
    ))}
  </div>
);

export default function App() {
  return (
    <div className="relative flex h-screen min-h-[900px] overflow-hidden bg-[#efefef] font-['Open_Sans','Noto_Sans_CJK_SC',sans-serif] text-base leading-5 text-black">
      <div className="flex min-w-0 flex-1 flex-col">
        <header className="flex h-[31px] shrink-0 items-center bg-white">
          <svg width="13" height="16" viewBox="0 0 13 16" fill="none" stroke="#a39a9a" strokeWidth="2">
            <circle cx="5" cy="8" r="6.500" />
            <path d="M8 5c-4-2-6 4-2 6l3-1M3 8h5" strokeWidth="1.500" />
          </svg>
          <h1 className="ml-2">20083: EBCFinancialGroupKY-Demo02 - 模拟帐户 - EBC Financial Group (Cayman) Limited - [XAUUSD,M15]</h1>
          <div className="ml-auto flex items-center gap-[46px] pr-1.5">
            <button aria-label="最小化" className="h-px w-3 bg-black" />
            <button aria-label="还原">
              <svg width="14" height="14" viewBox="0 0 14 14" fill="none" stroke="#000"><path d="M1.500 3.500h9v10h-9zM3.500 3V1.500h9v10H11" /></svg>
            </button>
            <button aria-label="关闭窗口">
              <svg width="12" height="12" viewBox="0 0 12 12" stroke="#000"><path d="M0 0l12 12M12 0L0 12" /></svg>
            </button>
          </div>
        </header>
        <nav className="flex h-[25px] shrink-0 items-center overflow-hidden">
          <span className="-ml-px"><TerminalIcon /></span>
          <div className="ml-2.5 flex gap-[25px] text-[15px] leading-[18px]">
            {menus.map((m) => <button key={m}>{m}</button>)}
          </div>
          <div className="ml-auto flex gap-[3px]">
            <button aria-label="最小化图表" className="flex h-[22px] w-[22px] items-center justify-center border border-[#e0e0e0] bg-white">
              <span className="mt-1.5 h-0.5 w-1.5 bg-[#778899]" />
            </button>
            <button aria-label="还原图表" className="flex h-[22px] w-[22px] items-center justify-center border border-[#e0e0e0] bg-white">
              <svg width="9" height="9" viewBox="0 0 9 9" fill="none" stroke="#778899"><path d="M.5 4.500h5v4h-5zM.5 4h5M2.500 2.500v-2h6v5h-2M2.500 1h6" /></svg>
            </button>
            <span className="w-0.5 border-l border-[#e0e0e0] bg-white" />
          </div>
        </nav>
        <Toolbars />
        <main className="flex min-h-0 flex-1">
          <aside className="flex w-[546px] shrink-0 flex-col">
            <MarketWatch />
            <div className="h-px shrink-0" />
            <Navigator />
            <div className="h-1.5 shrink-0" />
          </aside>
          <div className="w-1.5 shrink-0" />
          <ChartWindow />
        </main>
        <Terminal />
      </div>
      <div className="flex w-3 shrink-0 flex-col overflow-hidden bg-[#efefef]">
        <ChevronUp size={18} className="my-0.5 ml-[3px] shrink-0" />
        <div className="mb-[15px] flex-1 bg-[#cdcdcd]" />
      </div>
      <Watermark />
    </div>
  );
}
